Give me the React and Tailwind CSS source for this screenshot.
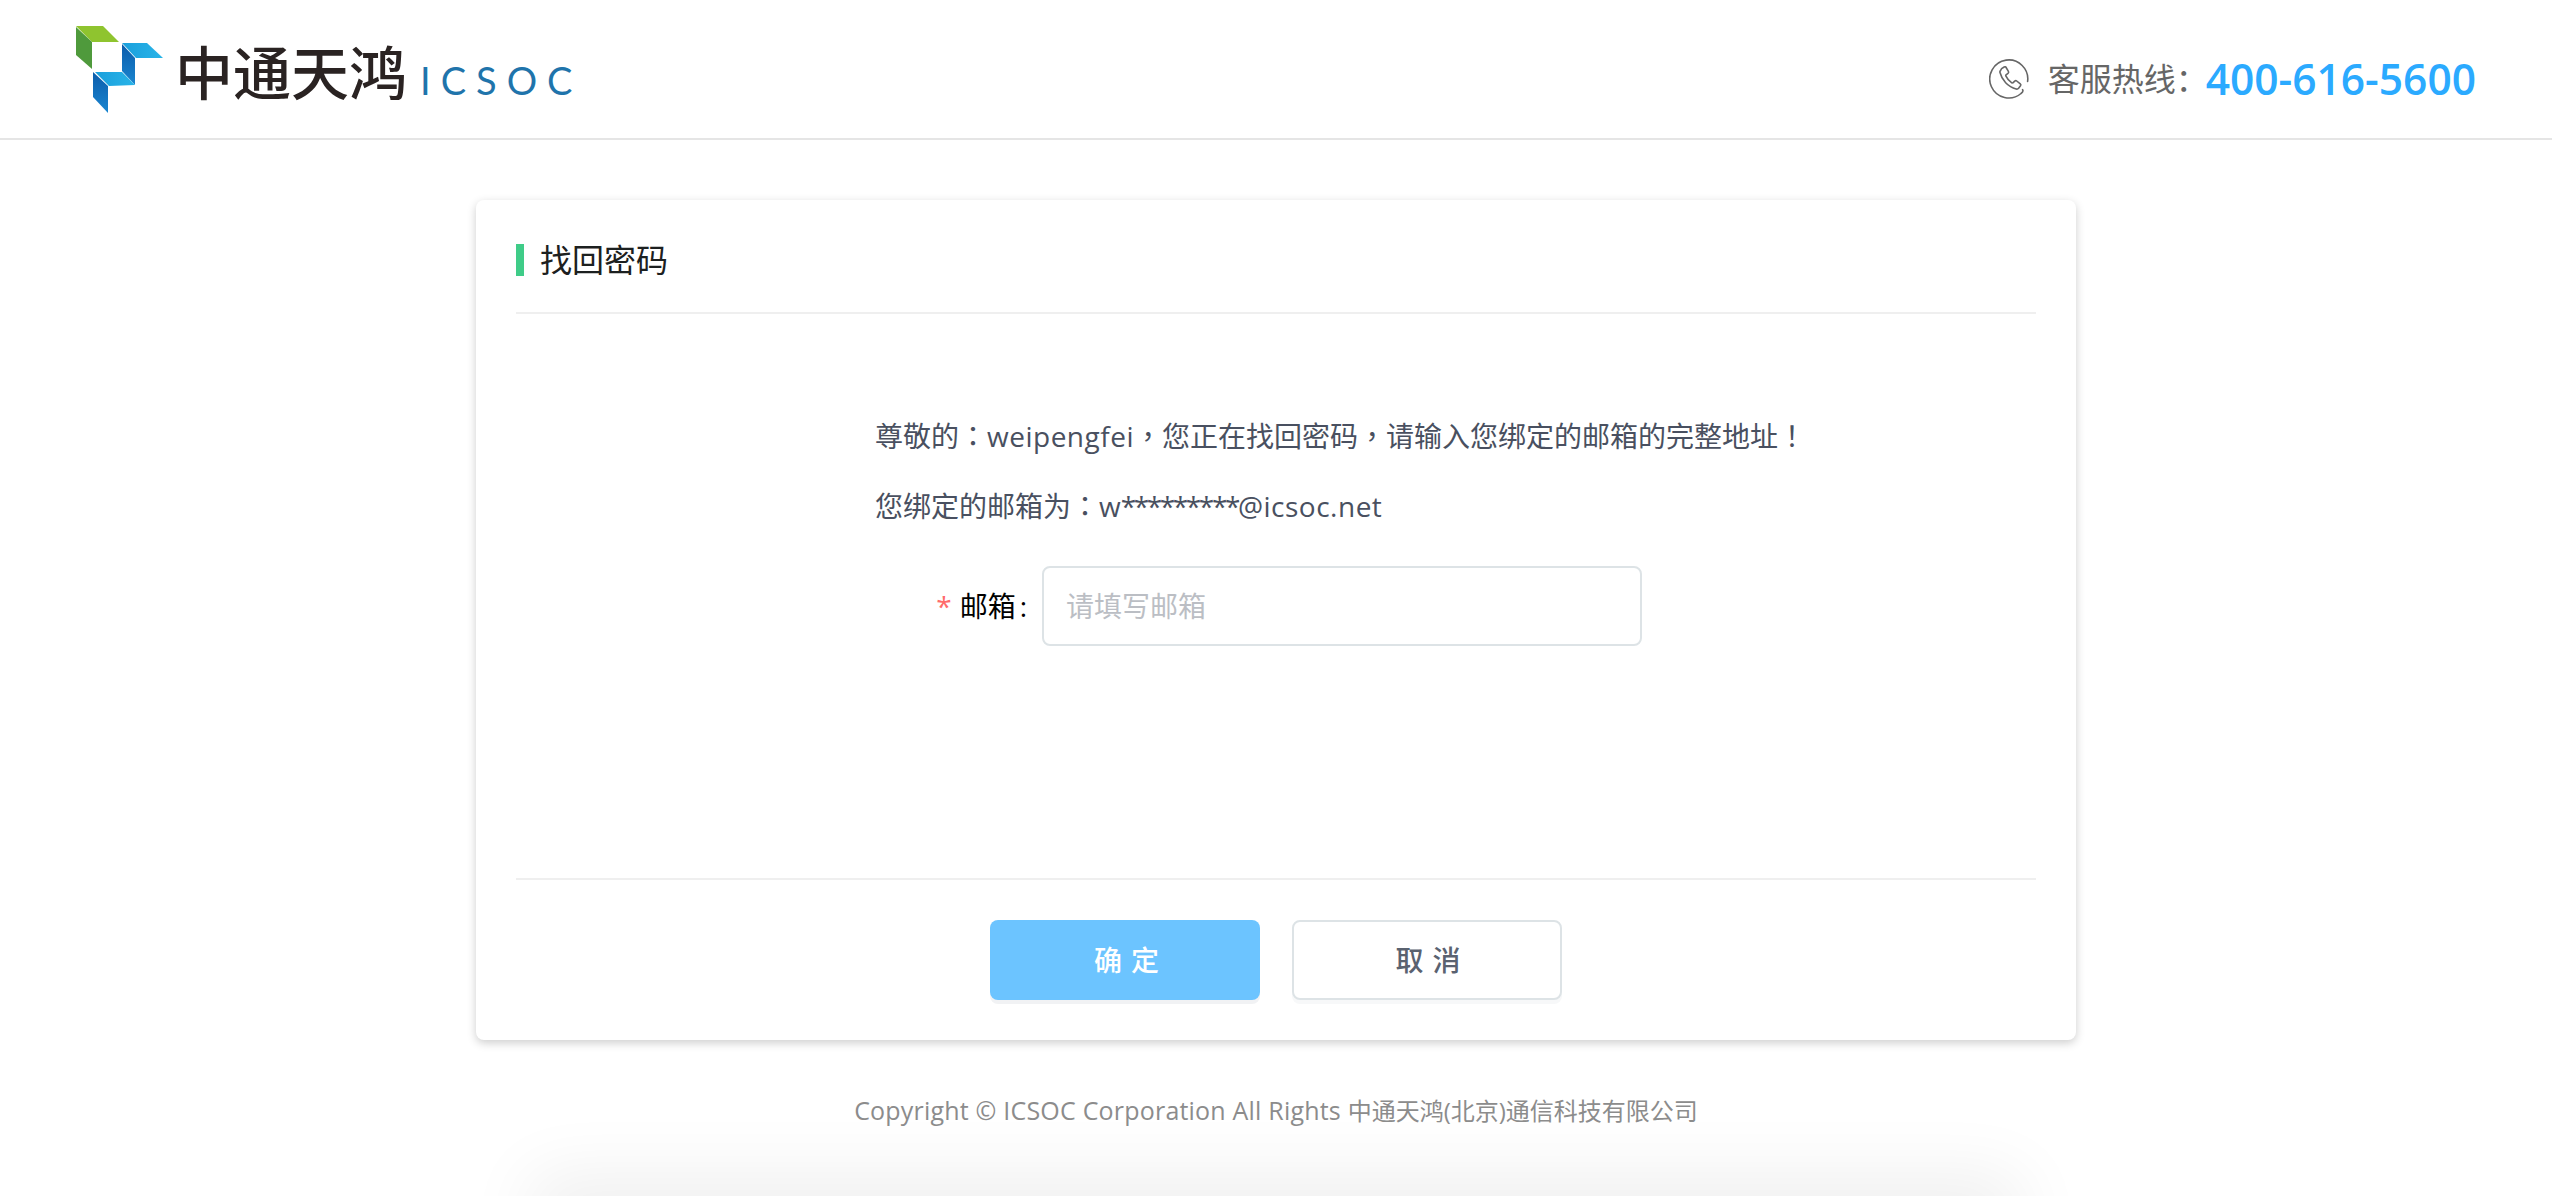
const FONT = "font-['Open_Sans','Noto_Sans_CJK_SC',sans-serif]";

// centred full-width punctuation, the SC face sets it in the corner
const Punct = ({ children }) => <span className="leading-[0] font-['Noto_Sans_CJK_TC',sans-serif]">{children}</span>;

const Logo = () => (
    <div className="flex items-start">
        <svg width="120" height="105" viewBox="0 0 120 105" className="mt-[15px] shrink-0">
            <defs>
                <linearGradient id="blueTop" x1="0" y1="0" x2="1" y2="0">
                    <stop offset="0" stopColor="#1a9fdc" />
                    <stop offset="1" stopColor="#29b4e8" />
                </linearGradient>
                <linearGradient id="blueSide" x1="0" y1="0" x2="0" y2="1">
                    <stop offset="0" stopColor="#0b5cab" />
                    <stop offset="1" stopColor="#1a86d0" />
                </linearGradient>
            </defs>
            <polygon points="16,11 43,11 59,27 32,27" fill="#8fc42f" />
            <polygon points="16,12 32,27 32,54 16,40" fill="#4f9a3c" />
            <polygon points="62,28 87,28 103,43 76,43" fill="url(#blueTop)" />
            <polygon points="62,29 75,43 75,70 62,56" fill="url(#blueSide)" />
            <polygon points="35,57 62,57 75,70 49,71" fill="url(#blueTop)" />
            <polygon points="33,57 48,71 48,98 33,82" fill="url(#blueSide)" />
        </svg>
        <span className="-ml-[5px] mt-[38px] text-[58px] leading-[64px] font-medium text-[#2a2322] font-['Noto_Sans_CJK_SC',sans-serif]">中通天鸿</span>
        <span className="ml-[13px] mt-[58px] text-[38px] leading-[44px] tracking-[10px] font-normal text-[#1f74ab] font-['Lato',sans-serif]">ICSOC</span>
    </div>
);

const PhoneIcon = () => (
    <svg width="40" height="40" viewBox="0 0 40 40" fill="none" stroke="#666" strokeWidth="1.6" strokeLinecap="round" strokeLinejoin="round">
        <path d="M38.6 22.5A19 19 0 1 0 32 34.5c1.6-1.2 2.4-2.6 1.6-3.8" />
        <path d="M12.6 9.6l2.6-1.6c.7-.4 1.5-.2 1.9.5l2.3 3.9c.4.7.2 1.4-.4 1.9l-2 1.5c-.3.3-.4.7-.2 1.1 1.4 3 3.3 5.2 6 7 .4.2.8.2 1.1-.1l1.8-1.7c.6-.5 1.4-.6 2-.1l3.6 2.9c.6.5.7 1.3.2 1.9l-1.9 2.4c-.6.7-1.5 1-2.4.8-8.300-2.100-14.400-9-16.300-16.700-.2-.9.0-1.300.7-1.800z" />
    </svg>
);

const App = () => {
    return (
        <div className={`h-screen overflow-hidden bg-white ${FONT}`}>
            <header className="h-[140px] border-b-2 border-[#e5e5e5] flex justify-between pl-[60px] pr-[76px]">
                <Logo />
                <div className="flex items-center h-[160px] -mt-[1px]">
                    <PhoneIcon />
                    <span className="ml-[19px] text-[32px] text-[#666666]">客服热线：</span>
                    <span className="-ml-[2px] text-[42.5px] font-semibold text-[#2baaff]">400-616-5600</span>
                </div>
            </header>

            <main className="w-[1600px] h-[840px] mx-auto mt-[60px] bg-white rounded-lg shadow-[0_3px_10px_rgba(0,0,0,0.2)] px-10">
                <div className="h-[114px] border-b-2 border-[#efefef] pt-[44px]">
                    <h2 className="flex items-center h-8 border-l-8 border-[#3fcc88] pl-4 text-[32px] font-normal text-[#1c2020]">找回密码</h2>
                </div>

                <div className="h-[566px] border-b-2 border-[#efefef] pl-[359px] pt-[87px]">
                    <p className="text-[28px] leading-[70px] text-[#495060]">
                        尊敬的<Punct>：</Punct><span className="tracking-[0.5px]">weipengfei</span><Punct>，</Punct>您正在找回密码<Punct>，</Punct>请输入您绑定的邮箱的完整地址<Punct>！</Punct>
                    </p>
                    <p className="text-[28px] leading-[70px] text-[#495060]">
                        您绑定的邮箱为<Punct>：</Punct>w<span className="tracking-[-2.4px]">*********</span><span className="tracking-[0.5px]">@icsoc.net</span>
                    </p>
                    <div className="flex items-center mt-[25px]">
                        <label className="w-[167px] flex justify-end pr-[15px] text-[28px] text-black">
                            <span className="text-[#ff6b6b] mr-[8px]">*</span>邮箱<span className="ml-1">:</span>
                        </label>
                        <input
                            type="text"
                            placeholder="请填写邮箱"
                            className="w-[600px] h-20 border-2 border-[#dde3e6] rounded-lg px-[22px] text-[28px] outline-none placeholder:text-[#bbbec4]"
                        />
                    </div>
                </div>

                <div className="flex justify-center gap-8 pt-10">
                    <button type="button" className="w-[270px] h-20 pl-[12px] rounded-lg bg-[#6cc4ff] text-white text-[28px] font-medium tracking-[9px] shadow-[0_4px_0_#f1f2f4]">确定</button>
                    <button type="button" className="w-[270px] h-20 pl-[11px] rounded-lg border-2 border-[#dde3e6] bg-white text-[#5a6270] text-[28px] font-medium tracking-[9px] shadow-[0_4px_0_#f7f8f9]">取消</button>
                </div>
            </main>

            <footer className="mt-[52px] text-center text-[25px] leading-9 tracking-[0.2px] text-[#8c8c8c]">
                Copyright © ICSOC Corporation All Rights <span className="text-[24px] tracking-normal">中通天鸿(北京)通信科技有限公司</span>
            </footer>

            <div className="w-[1490px] h-20 mx-auto mt-[76px] bg-[#f0f0f0] shadow-[0_-30px_70px_rgba(0,0,0,0.065)]"></div>
        </div>
    )
}

export default App
